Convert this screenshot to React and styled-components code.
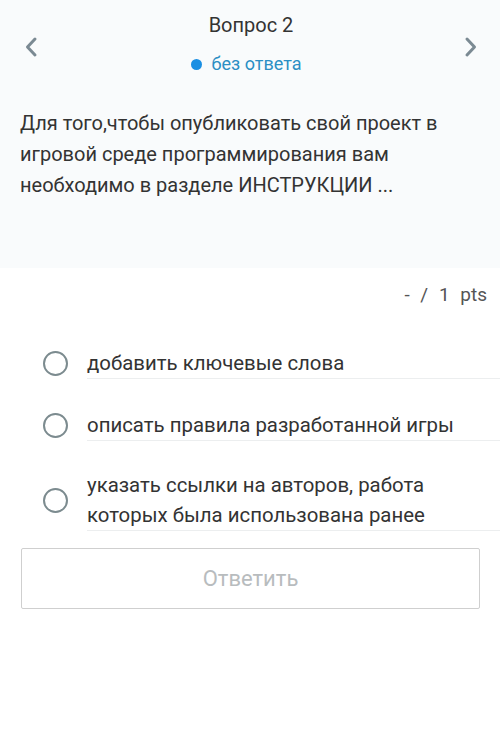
import React from "react";
import styled, { createGlobalStyle } from "styled-components";

const GlobalStyle = createGlobalStyle`
  html, body {
    margin: 0;
    padding: 0;
    background: #ffffff;
    font-family: Roboto, "Noto Sans", Arial, sans-serif;
  }
`;

const Page = styled.div`
  width: 500px;
  min-height: 733px;
  background: #fff;
`;

const Top = styled.section`
  background: #f9fbfc;
  height: 268px;
  box-sizing: border-box;
  padding-top: 11px;
`;

const Header = styled.div`
  display: flex;
  align-items: center;
  justify-content: space-between;
  padding: 0 21px 0 23px;
`;

const NavButton = styled.button`
  border: 0;
  background: none;
  padding: 0;
  margin-top: 8px;
  width: 16px;
  height: 24px;
  display: flex;
  align-items: center;
  justify-content: center;
  color: #7b8a93;
`;

const Title = styled.div`
  display: flex;
  flex-direction: column;
  align-items: center;
`;

const Heading = styled.h2`
  margin: 0;
  font-size: 20px;
  font-weight: 400;
  color: #333;
  line-height: 28px;
`;

const Status = styled.div`
  display: flex;
  align-items: center;
  gap: 10px;
  margin: 14px 10px 0 0;
  font-size: 18px;
  color: #2b8fc4;
  line-height: 22px;
`;

const Dot = styled.span`
  width: 11px;
  height: 11px;
  border-radius: 50%;
  background: #1a8fe3;
`;

const Question = styled.p`
  margin: 33px 0 0;
  padding: 0 20px;
  font-size: 20px;
  line-height: 31px;
  color: #333;
`;

const Points = styled.div`
  text-align: right;
  padding: 14px 13px 0 0;
  font-size: 19px;
  color: #555;
  word-spacing: 6px;
  line-height: 26px;
`;

const Options = styled.ul`
  list-style: none;
  margin: 40px 0 0;
  padding: 0;
`;

const Option = styled.li`
  display: flex;
  align-items: center;
  margin-bottom: ${(p) => p.$gap}px;
`;

const Radio = styled.span`
  flex: none;
  width: 25px;
  height: 25px;
  border: 2.5px solid #7c8b8f;
  border-radius: 50%;
  margin: 0 19px 0 43px;
  box-sizing: border-box;
`;

const Label = styled.div`
  flex: 1;
  font-size: 20.4px;
  line-height: 30px;
  color: #333;
  border-bottom: 1px solid #eceeef;
`;

const SubmitButton = styled.button`
  display: block;
  margin: 17px 0 0 21px;
  width: 459px;
  height: 61px;
  border: 1.5px solid #cfcfcf;
  border-radius: 2px;
  background: #fff;
  font-family: inherit;
  font-size: 22px;
  color: #b8bcbe;
`;

const Chevron = ({ dir }) => (
  <svg width="14" height="22" viewBox="0 0 14 22" fill="none">
    <path
      d={dir === "left" ? "M11 3 L3.5 11 L11 19" : "M3 3 L10.5 11 L3 19"}
      stroke="currentColor"
      strokeWidth="3"
      strokeLinecap="round"
      strokeLinejoin="round"
    />
  </svg>
);

const options = [
  { text: "добавить ключевые слова", gap: 31 },
  { text: "описать правила разработанной игры", gap: 29 },
  {
    text: (
      <>
        указать ссылки на авторов, работа
        <br />
        которых была использована ранее
      </>
    ),
    gap: 0,
  },
];

export default function App() {
  return (
    <Page>
      <GlobalStyle />
      <Top>
        <Header>
          <NavButton aria-label="назад">
            <Chevron dir="left" />
          </NavButton>
          <Title>
            <Heading>Вопрос 2</Heading>
            <Status>
              <Dot />
              без ответа
            </Status>
          </Title>
          <NavButton aria-label="вперёд">
            <Chevron dir="right" />
          </NavButton>
        </Header>
        <Question>
          Для того,чтобы опубликовать свой проект в игровой среде
          программирования вам необходимо в разделе ИНСТРУКЦИИ ...
        </Question>
      </Top>
      <Points>- / 1 pts</Points>
      <Options>
        {options.map((o, i) => (
          <Option key={i} $gap={o.gap}>
            <Radio />
            <Label>{o.text}</Label>
          </Option>
        ))}
      </Options>
      <SubmitButton>Ответить</SubmitButton>
    </Page>
  );
}
